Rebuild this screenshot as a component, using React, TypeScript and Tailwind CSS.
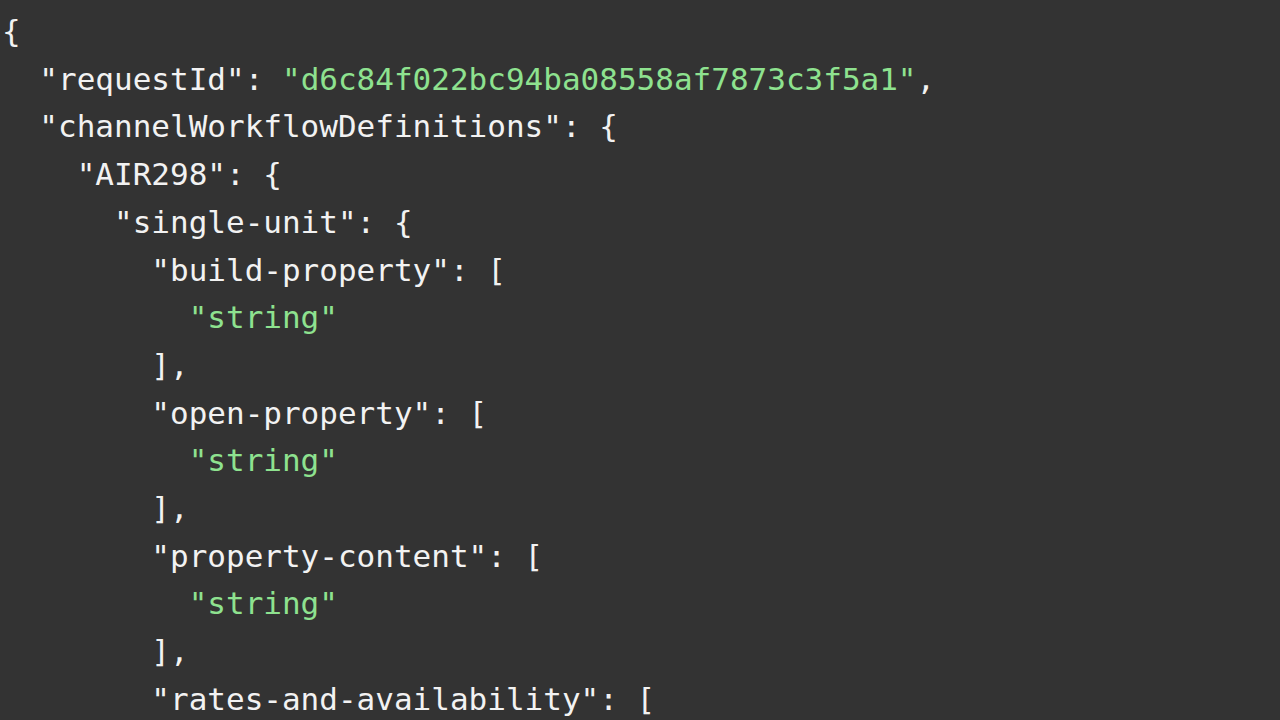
import React from "react";

type Seg = { t: string; g?: boolean };
const lines: Seg[][] = [
  [{ t: "{" }],
  [{ t: '  "requestId": ' }, { t: '"d6c84f022bc94ba08558af7873c3f5a1"', g: true }, { t: "," }],
  [{ t: '  "channelWorkflowDefinitions": {' }],
  [{ t: '    "AIR298": {' }],
  [{ t: '      "single-unit": {' }],
  [{ t: '        "build-property": [' }],
  [{ t: "          " }, { t: '"string"', g: true }],
  [{ t: "        ]," }],
  [{ t: '        "open-property": [' }],
  [{ t: "          " }, { t: '"string"', g: true }],
  [{ t: "        ]," }],
  [{ t: '        "property-content": [' }],
  [{ t: "          " }, { t: '"string"', g: true }],
  [{ t: "        ]," }],
  [{ t: '        "rates-and-availability": [' }],
];

export default function App() {
  return (
    <div className="w-[1280px] h-[720px] overflow-hidden bg-[#333333] pt-[8px] pl-[2px]">
      <pre
        className="m-0 text-[31px] leading-[47.7px] text-[#f2f2f2] whitespace-pre"
        style={{ fontFamily: '"DejaVu Sans Mono", "Liberation Mono", monospace' }}
      >
        {lines.map((l, i) => (
          <div key={i}>
            {l.map((s, j) => (
              <span key={j} className={s.g ? "text-[#8ee28f]" : undefined}>
                {s.t}
              </span>
            ))}
          </div>
        ))}
      </pre>
    </div>
  );
}
